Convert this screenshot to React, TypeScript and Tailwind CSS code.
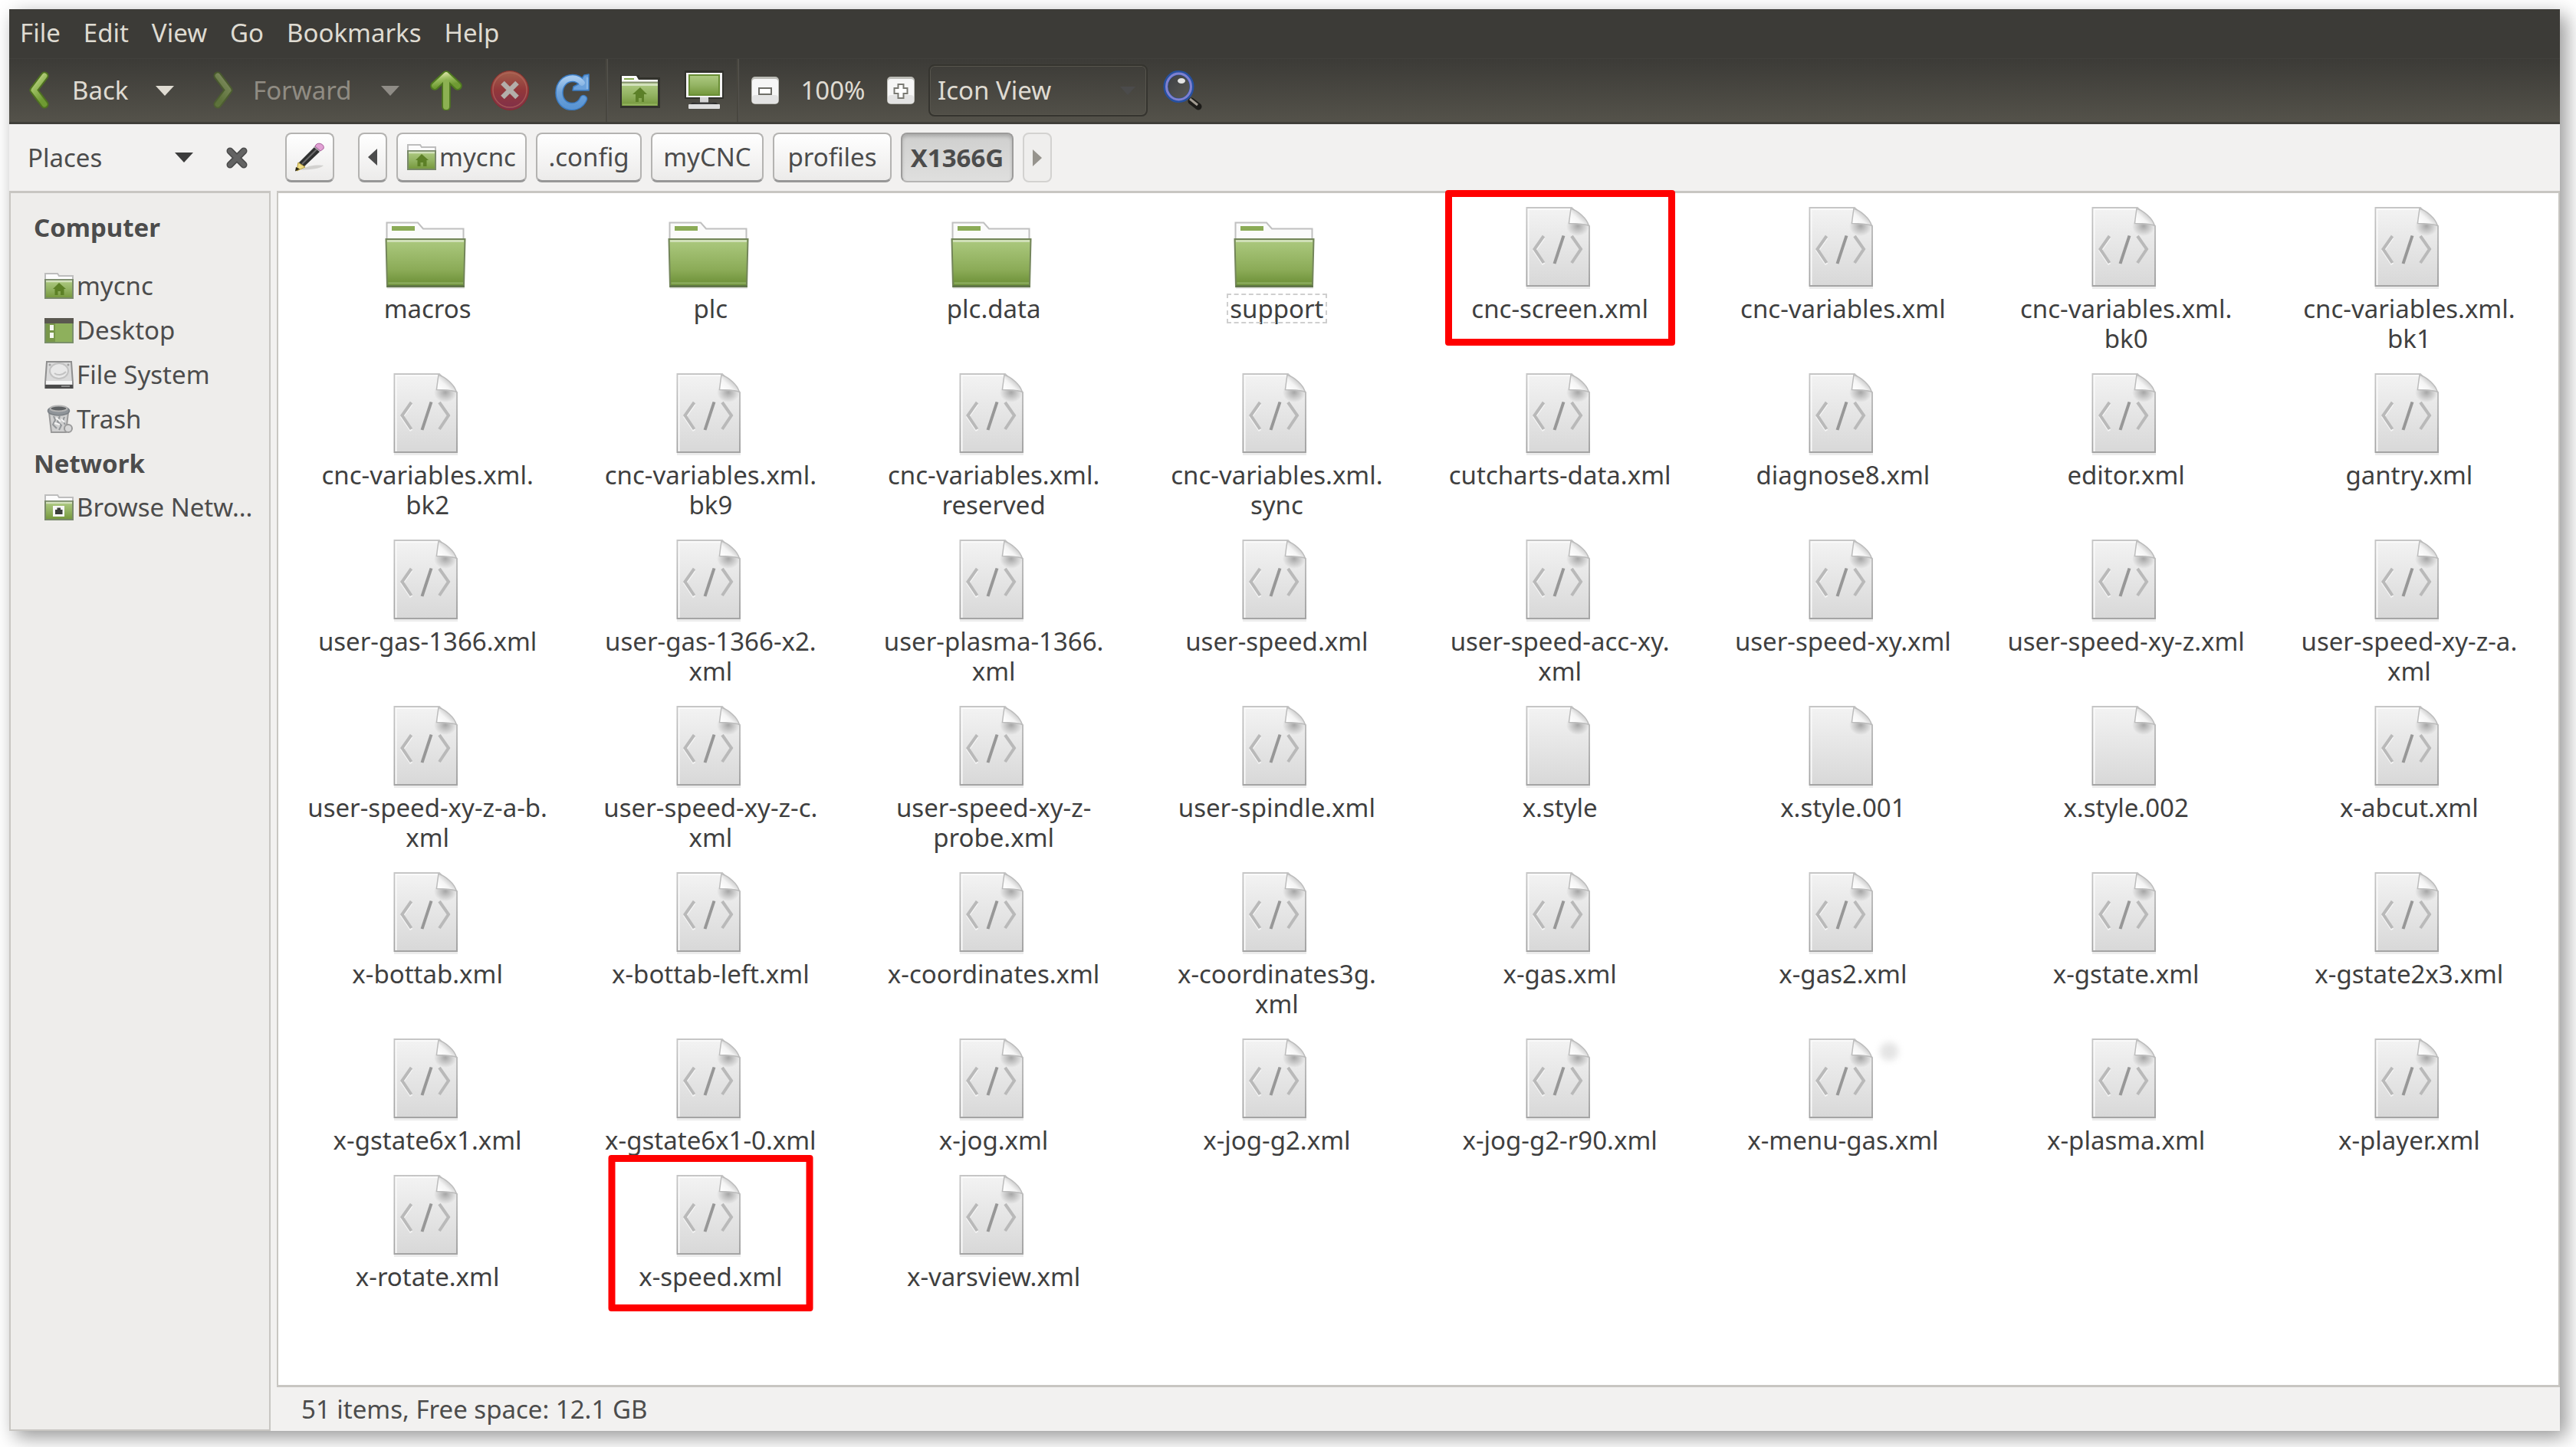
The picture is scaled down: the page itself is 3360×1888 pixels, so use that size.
import React from "react";

type Kind = "folder" | "xml" | "blank";
type Entry = { name: string; kind: Kind; mark?: "wide" | "narrow"; focused?: boolean; dot?: boolean };

const xml = (name: string, extra: Partial<Entry> = {}): Entry => ({ name, kind: "xml", ...extra });
const folder = (name: string, focused = false): Entry => ({ name, kind: "folder", focused });
const blank = (name: string): Entry => ({ name, kind: "blank" });

const entries: Entry[] = [
  folder("macros"),
  folder("plc"),
  folder("plc.data"),
  folder("support", true),
  xml("cnc-screen.xml", { mark: "wide" }),
  xml("cnc-variables.xml"),
  xml("cnc-variables.xml.\nbk0"),
  xml("cnc-variables.xml.\nbk1"),
  xml("cnc-variables.xml.\nbk2"),
  xml("cnc-variables.xml.\nbk9"),
  xml("cnc-variables.xml.\nreserved"),
  xml("cnc-variables.xml.\nsync"),
  xml("cutcharts-data.xml"),
  xml("diagnose8.xml"),
  xml("editor.xml"),
  xml("gantry.xml"),
  xml("user-gas-1366.xml"),
  xml("user-gas-1366-x2.\nxml"),
  xml("user-plasma-1366.\nxml"),
  xml("user-speed.xml"),
  xml("user-speed-acc-xy.\nxml"),
  xml("user-speed-xy.xml"),
  xml("user-speed-xy-z.xml"),
  xml("user-speed-xy-z-a.\nxml"),
  xml("user-speed-xy-z-a-b.\nxml"),
  xml("user-speed-xy-z-c.\nxml"),
  xml("user-speed-xy-z-\nprobe.xml"),
  xml("user-spindle.xml"),
  blank("x.style"),
  blank("x.style.001"),
  blank("x.style.002"),
  xml("x-abcut.xml"),
  xml("x-bottab.xml"),
  xml("x-bottab-left.xml"),
  xml("x-coordinates.xml"),
  xml("x-coordinates3g.\nxml"),
  xml("x-gas.xml"),
  xml("x-gas2.xml"),
  xml("x-gstate.xml"),
  xml("x-gstate2x3.xml"),
  xml("x-gstate6x1.xml"),
  xml("x-gstate6x1-0.xml"),
  xml("x-jog.xml"),
  xml("x-jog-g2.xml"),
  xml("x-jog-g2-r90.xml"),
  xml("x-menu-gas.xml", { dot: true }),
  xml("x-plasma.xml"),
  xml("x-player.xml"),
  xml("x-rotate.xml"),
  xml("x-speed.xml", { mark: "narrow" }),
  xml("x-varsview.xml"),
];

function Gradients() {
  return (
    <svg className="absolute size-0" aria-hidden="true">
      <defs>
        <linearGradient id="leaf" x1="0" y1="0" x2="0" y2="1">
          <stop offset="0" stopColor="#afcb83" />
          <stop offset="0.5" stopColor="#94b464" />
          <stop offset="1" stopColor="#74973b" />
        </linearGradient>
        <linearGradient id="leafDeep" x1="0" y1="0" x2="0" y2="1">
          <stop offset="0" stopColor="#adca80" />
          <stop offset="0.65" stopColor="#8bab57" />
          <stop offset="1" stopColor="#688c33" />
        </linearGradient>
        <linearGradient id="arrow" x1="0" y1="0" x2="0.4" y2="1">
          <stop offset="0" stopColor="#d3dd9d" />
          <stop offset="0.4" stopColor="#9dbf62" />
          <stop offset="1" stopColor="#6f9a33" />
        </linearGradient>
        <linearGradient id="paper" x1="0" y1="0" x2="0" y2="1">
          <stop offset="0" stopColor="#f3f3f3" />
          <stop offset="1" stopColor="#d8d8d8" />
        </linearGradient>
        <linearGradient id="paperEdge" x1="0" y1="0" x2="0" y2="1">
          <stop offset="0" stopColor="#c6c6c6" />
          <stop offset="1" stopColor="#a4a4a4" />
        </linearGradient>
        <linearGradient id="curl" x1="0.1" y1="0.9" x2="0.75" y2="0.3">
          <stop offset="0" stopColor="#ffffff" />
          <stop offset="0.5" stopColor="#f4f4f4" />
          <stop offset="1" stopColor="#bdbdbd" />
        </linearGradient>
        <linearGradient id="stop" x1="0" y1="0" x2="0" y2="1">
          <stop offset="0" stopColor="#a2604c" />
          <stop offset="0.5" stopColor="#92373a" />
          <stop offset="1" stopColor="#7f2f4a" />
        </linearGradient>
        <linearGradient id="blue" x1="0" y1="0" x2="0" y2="1">
          <stop offset="0" stopColor="#a5c9ee" />
          <stop offset="0.5" stopColor="#6fa3da" />
          <stop offset="1" stopColor="#5a95d4" />
        </linearGradient>
        <linearGradient id="lens" x1="0" y1="0" x2="1" y2="1">
          <stop offset="0" stopColor="#3b3d43" />
          <stop offset="1" stopColor="#5b5b54" />
        </linearGradient>
        <radialGradient id="foldShade">
          <stop offset="0" stopColor="#000000" stopOpacity="0.3" />
          <stop offset="1" stopColor="#000000" stopOpacity="0" />
        </radialGradient>
      </defs>
    </svg>
  );
}

function FolderArt() {
  return (
    <svg className="block h-[110px] w-[114px]" viewBox="0 0 114 110" aria-hidden="true">
      <rect x="4" y="108" width="101" height="2" fill="#e9e9e9" />
      <path d="M3.500 46V23.500H44L51 31.500H103.500V46Z" fill="#fbfbfb" stroke="#c0c0c0" strokeWidth="2" />
      <rect x="10" y="28" width="30" height="6" fill="#8bab57" />
      <path d="M2.500 45H105.500L104 107H4Z" fill="url(#leafDeep)" stroke="#73855a" strokeWidth="2" />
      <path d="M4 47.500H104" stroke="#d6e3c1" strokeWidth="2.500" />
      <path d="M5.500 102.500H103" stroke="#86a758" strokeWidth="3" />
      <path d="M4 106.500H104.500" stroke="#5f734a" strokeWidth="2.500" />
    </svg>
  );
}

function PageArt({ code }: { code: boolean }) {
  return (
    <svg className="block h-[110px] w-[114px]" viewBox="0 0 114 110" aria-hidden="true">
      <rect x="13" y="107" width="83" height="3" fill="#ececec" />
      <path d="M13.500 4H72L95 28V106H13.500Z" fill="url(#paper)" stroke="url(#paperEdge)" strokeWidth="2" />
      <path d="M15.500 105V6H70" fill="none" stroke="#fafafa" strokeWidth="2" />
      <ellipse cx="80" cy="28" rx="15" ry="13" fill="url(#foldShade)" />
      <path d="M71 5C70 12 69 19 68.500 24.500C77 24.500 87 25 94 27C92 18 80 8 71 5Z" fill="url(#curl)" stroke="#bcbcbc" strokeWidth="1.500" />
      {code && (
        <g fill="none" strokeWidth="4">
          <path d="M35.500 43L23.500 60L35.500 78" stroke="#ffffff" strokeOpacity="0.7" />
          <path d="M35.500 41L23.500 58L35.500 76" stroke="#b9b9b9" />
          <path d="M72 41L84 58L72 76" stroke="#b9b9b9" />
          <path d="M61.500 40.500L49.500 77" stroke="#979797" />
        </g>
      )}
    </svg>
  );
}

function Tile({ entry }: { entry: Entry }) {
  return (
    <li className="relative flex flex-col items-center pb-[23px]">
      {entry.mark === "wide" && (
        <span className="pointer-events-none absolute -top-[19px] left-1/2 h-[203px] w-[300px] -translate-x-1/2 rounded border-9 border-[#ff0000]" />
      )}
      {entry.mark === "narrow" && (
        <span className="pointer-events-none absolute -top-[23px] left-1/2 h-[204px] w-[267px] -translate-x-1/2 rounded border-9 border-[#ff0000]" />
      )}
      <button type="button" className="relative flex flex-col items-center">
        {entry.kind === "folder" ? <FolderArt /> : <PageArt code={entry.kind === "xml"} />}
        {entry.dot && <span className="absolute top-2 left-1/2 ml-12 size-6 rounded-full bg-[#e4e4e4] blur-[4px]" />}
        <span
          className={
            entry.focused
              ? "mt-[6px] -mx-1 px-1 text-center leading-[39px] whitespace-pre outline-2 -outline-offset-2 outline-dashed outline-[#cfcfcf]"
              : "mt-[6px] text-center leading-[39px] whitespace-pre"
          }
        >
          {entry.name}
        </span>
      </button>
    </li>
  );
}

function HomeFolder({ className }: { className: string }) {
  return (
    <svg className={className} viewBox="0 0 38 34" aria-hidden="true">
      <path d="M1 9V1H17L19 4H37V9Z" fill="#fcfcfc" stroke="#bdbdbd" strokeWidth="2" />
      <rect x="1" y="9" width="36" height="24" fill="url(#leaf)" stroke="#79896a" strokeWidth="2" />
      <path d="M2 11H36" stroke="#d3e1bd" strokeWidth="2.500" />
      <path d="M19 13L28 21H25.500V29H21V24H17.500V29H13.500V21H11Z" fill="#5c8026" />
    </svg>
  );
}

function NetworkFolder() {
  return (
    <svg className="h-[34px] w-[38px]" viewBox="0 0 38 34" aria-hidden="true">
      <path d="M1 9V1H17L19 4H37V9Z" fill="#fcfcfc" stroke="#bdbdbd" strokeWidth="2" />
      <rect x="1" y="9" width="36" height="24" fill="url(#leaf)" stroke="#79896a" strokeWidth="2" />
      <path d="M2 11H36" stroke="#d3e1bd" strokeWidth="2.500" />
      <rect x="11" y="15" width="15" height="14" fill="#f7f7f7" />
      <path d="M14 26V20H16.500V17.500H21V20H23.500V26Z" fill="#3b3f3b" />
    </svg>
  );
}

function DesktopIcon() {
  return (
    <svg className="h-[34px] w-[38px]" viewBox="0 0 38 34" aria-hidden="true">
      <rect x="1" y="2" width="36" height="31" fill="#8eb05c" stroke="#7a906a" strokeWidth="2" />
      <rect x="2" y="8" width="12" height="24" fill="#78974a" />
      <rect x="0" y="1" width="38" height="7" fill="#5a5850" />
      <rect x="7" y="10" width="5" height="7" fill="#f6f8f2" />
      <rect x="7" y="20" width="5" height="7" fill="#f6f8f2" />
    </svg>
  );
}

function DriveIcon() {
  return (
    <svg className="h-[38px] w-[38px]" viewBox="0 0 38 38" aria-hidden="true">
      <path d="M3 2H35L37 30V36H1V30Z" fill="#dadada" stroke="#8e8e8e" strokeWidth="2" />
      <ellipse cx="19" cy="14" rx="12" ry="10" fill="#e8e8e8" stroke="#c2c2c2" strokeWidth="2" />
      <path d="M13 17C17 20 23 20 28 15" fill="none" stroke="#c2c2c2" strokeWidth="2" />
      <circle cx="7" cy="6" r="1.500" fill="#a0a0a0" />
      <circle cx="31" cy="6" r="1.500" fill="#a0a0a0" />
      <rect x="2" y="27" width="34" height="4" fill="#f6f6f6" />
      <rect x="1" y="32" width="36" height="5" fill="#4b4b4b" />
      <rect x="22" y="33" width="11" height="2" fill="#8b8b8b" />
    </svg>
  );
}

function TrashIcon() {
  return (
    <svg className="h-[38px] w-[38px]" viewBox="0 0 38 38" aria-hidden="true">
      <path d="M6 10L9 36H28L31 10Z" fill="#cfcfcf" stroke="#9a9a9a" strokeWidth="2" />
      <path d="M12 15L14 20L11 26L16 31M20 15L17 22L22 27L19 33M26 16L24 21L27 26" fill="none" stroke="#94979a" strokeWidth="2" />
      <path d="M15 17L21 22M13 24L20 26M22 19L26 23" stroke="#f4f4f4" strokeWidth="2" />
      <ellipse cx="18.500" cy="8" rx="14" ry="6" fill="#8f9499" stroke="#7b8085" strokeWidth="1.500" />
      <ellipse cx="18.500" cy="5" rx="11" ry="3.500" fill="#5e6163" stroke="#b4b4b4" strokeWidth="2" />
      <circle cx="31" cy="31" r="5" fill="#d8d8d8" stroke="#9a9a9a" strokeWidth="2" />
    </svg>
  );
}

function Caret({ className }: { className: string }) {
  return (
    <svg className={className} viewBox="0 0 24 13" aria-hidden="true">
      <path d="M0 0H24L12 13Z" fill="currentColor" />
    </svg>
  );
}

function Chevron({ flip }: { flip?: boolean }) {
  return (
    <svg className={flip ? "h-[50px] w-7 -scale-x-100 opacity-50" : "h-[50px] w-7"} viewBox="0 0 28 50" aria-hidden="true">
      <path d="M22 6L8 24.500L22 43" fill="none" stroke="#4f7220" strokeWidth="11" strokeLinecap="round" strokeLinejoin="round" />
      <path d="M22 6L8 24.500L22 43" fill="none" stroke="url(#arrow)" strokeWidth="7" strokeLinecap="round" strokeLinejoin="round" />
    </svg>
  );
}

function UpIcon() {
  return (
    <svg className="h-[52px] w-[42px]" viewBox="0 0 42 52" aria-hidden="true">
      <path d="M21 47V9M6 20L21 6L36 20" fill="none" stroke="#4f7a1f" strokeWidth="11.500" strokeLinecap="round" strokeLinejoin="round" />
      <path d="M21 47V9" fill="none" stroke="#8cb152" strokeWidth="8" strokeLinecap="round" />
      <path d="M6 20L21 6L36 20" fill="none" stroke="url(#arrow)" strokeWidth="7.500" strokeLinecap="round" strokeLinejoin="round" />
    </svg>
  );
}

function StopIcon() {
  return (
    <svg className="h-[52px] w-[50px]" viewBox="0 0 50 52" aria-hidden="true">
      <ellipse cx="25" cy="26" rx="24.500" ry="25.500" fill="url(#stop)" stroke="#8b2c2c" strokeWidth="1" />
      <ellipse cx="25" cy="25.500" rx="22" ry="22.500" fill="none" stroke="#b4675d" strokeOpacity="0.7" strokeWidth="1.500" />
      <path d="M15.500 16L34.500 35M34.500 16L15.500 35" stroke="#b3aeaa" strokeWidth="6.500" />
    </svg>
  );
}

function ReloadIcon() {
  return (
    <svg className="h-[52px] w-[46px]" viewBox="0 0 46 52" aria-hidden="true">
      <path d="M37 37C34 44 28 47 22 47C12 47 5.500 39 5.500 29C5.500 18 13 10 23 10C28 10 32 12 35 16" fill="none" stroke="#3b7cc4" strokeWidth="10.500" strokeLinecap="round" />
      <path d="M44 5V26H23L24 21L30 18L38 6Z" fill="#6ba1db" stroke="#3b7cc4" strokeWidth="1.500" strokeLinejoin="round" />
      <path d="M37 37C34 44 28 47 22 47C12 47 5.500 39 5.500 29C5.500 18 13 10 23 10C28 10 32 12 35 16" fill="none" stroke="url(#blue)" strokeWidth="7.500" strokeLinecap="round" />
      <path d="M42 9V24" stroke="#8ab7e6" strokeWidth="2.500" />
    </svg>
  );
}

function BigHomeIcon() {
  return (
    <svg className="h-[52px] w-[52px]" viewBox="0 0 52 52" aria-hidden="true">
      <path d="M0 6H25V9H52V49H0Z" fill="#32322c" />
      <path d="M2 7H21L24 12H49V18H2Z" fill="#fafafa" />
      <rect x="5" y="10" width="13" height="2" fill="#86a951" />
      <rect x="2" y="16" width="47" height="30" fill="url(#leaf)" />
      <path d="M2 15.500H49" stroke="#84906f" strokeWidth="2" />
      <path d="M2 18.500H49" stroke="#d3e1bd" strokeWidth="3" />
      <path d="M26 22L35 31H31V41H28V36H24V41H20V31H16Z" fill="#5c8028" />
      <path d="M3 44.500H48" stroke="#93b45f" strokeWidth="2" />
    </svg>
  );
}

function ComputerIcon() {
  return (
    <svg className="h-[52px] w-[52px]" viewBox="0 0 52 52" aria-hidden="true">
      <rect x="0" y="0" width="51" height="37" rx="1" fill="#31312c" />
      <rect x="2" y="3" width="47" height="32" fill="#f3f3f3" />
      <rect x="6" y="6" width="39" height="26" fill="url(#leaf)" stroke="#6a8f35" strokeWidth="2" />
      <path d="M20 35H31V42H20Z" fill="#d4d4d4" />
      <path d="M10 42H41L46 46H5Z" fill="#2b2b2b" />
      <path d="M16 42L36 44H26Z" fill="#b9b9b9" />
      <rect x="5" y="44" width="41" height="6" rx="1" fill="#dedede" />
      <path d="M8 44L20 41.500H33L40 44Z" fill="#3a3a3a" />
    </svg>
  );
}

function ZoomIcon({ plus }: { plus?: boolean }) {
  return (
    <svg className="h-9 w-9" viewBox="0 0 36 36" aria-hidden="true">
      <rect x="0" y="0" width="36" height="36" rx="5" fill="#bcbcb6" />
      <rect x="1" y="3" width="34" height="32" rx="4" fill="#f6f6f6" />
      <rect x="1" y="24" width="34" height="11" rx="4" fill="#e3e3e3" />
      {plus ? (
        <path d="M14.500 10H21.500V15H26.500V22H21.500V28H14.500V22H9.500V15H14.500Z" fill="#ffffff" stroke="#7a7a74" strokeWidth="2" />
      ) : (
        <rect x="10" y="15" width="16" height="8" fill="#ffffff" stroke="#6e6e68" strokeWidth="2" />
      )}
    </svg>
  );
}

function SearchIcon() {
  return (
    <svg className="h-[52px] w-[52px]" viewBox="0 0 52 52" aria-hidden="true">
      <path d="M37 40L46 47" stroke="#1d1c19" strokeWidth="9" strokeLinecap="round" />
      <path d="M35 37L45 45" stroke="#a19a90" strokeWidth="3" />
      <ellipse cx="20.500" cy="21" rx="17" ry="18" fill="url(#lens)" stroke="#2650a0" strokeWidth="6" />
      <ellipse cx="20.500" cy="21" rx="16" ry="17" fill="none" stroke="#7f80cf" strokeWidth="3" />
      <ellipse cx="24" cy="13.500" rx="5" ry="3.500" fill="#ffffff" fillOpacity="0.85" />
    </svg>
  );
}

function PencilIcon() {
  return (
    <svg className="h-10 w-10" viewBox="0 0 40 40" aria-hidden="true">
      <path d="M8 37C18 30 32 30 38 31C34 35 22 36 8 37Z" fill="#d2d1cf" />
      <path d="M5 28L26 7L33 13L12 33Z" fill="#2f3030" />
      <path d="M10 29L29 10" stroke="#6a6a6a" strokeWidth="2" />
      <path d="M25 7L29 4L36 10L33 13Z" fill="#a9a9a9" />
      <path d="M28 4C31 0 40 3 38 9L34 12L27 6Z" fill="#e1a0d4" stroke="#a8639c" strokeWidth="1" />
      <path d="M5 27L14 33L3 38Z" fill="#efdc84" stroke="#b39b3a" strokeWidth="1" />
      <path d="M2 33L7 35.500L1 38.500Z" fill="#2a2512" />
    </svg>
  );
}

function CloseIcon() {
  return (
    <svg className="h-7 w-7" viewBox="0 0 28 28" aria-hidden="true">
      <path d="M5 5L23 23M23 5L5 23" stroke="#4a4a4a" strokeWidth="9" strokeLinecap="round" />
      <path d="M5 5L23 23M23 5L5 23" stroke="#636363" strokeWidth="6" strokeLinecap="round" />
    </svg>
  );
}

const crumb =
  "flex h-[65px] items-center justify-center rounded-lg border-2 border-b-3 border-[#b4b3b1] border-b-[#979797] bg-linear-to-b from-white to-[#ecebea]";

const places = [
  { label: "mycnc", icon: <HomeFolder className="h-[34px] w-[38px]" /> },
  { label: "Desktop", icon: <DesktopIcon /> },
  { label: "File System", icon: <DriveIcon /> },
  { label: "Trash", icon: <TrashIcon /> },
];

function PlaceLink({ label, icon }: { label: string; icon: React.ReactNode }) {
  return (
    <li>
      <a href="#" className="flex h-[58px] items-center gap-1 pl-11">
        <span className="flex w-[38px] shrink-0 justify-center">{icon}</span>
        <span className="whitespace-nowrap">{label}</span>
      </a>
    </li>
  );
}

export default function App() {
  return (
    <div className="flex min-h-screen flex-col bg-white pt-3 pr-[21px] pb-[21px] pl-3 font-['Noto_Sans',sans-serif] text-[33px] leading-[40px] text-[#3f3f3f]">
      <Gradients />
      <div className="flex grow flex-col bg-[#f2f1f0] shadow-[8px_8px_24px_rgba(0,0,0,0.42)]">
        <header className="bg-[#3c3b37] text-[#dfdbd2]">
          <nav className="flex h-16 items-center gap-[30px] pb-[2px] pl-[14px]">
            {["File", "Edit", "View", "Go", "Bookmarks", "Help"].map((m) => (
              <button type="button" key={m}>
                {m}
              </button>
            ))}
          </nav>
          <div className="flex h-[86px] items-center border-t border-b-3 border-t-[#42413d] border-b-[#403f3a] bg-linear-to-b from-[#3c3b37] to-[#54524a] pl-6">
            <button type="button" className="flex w-[158px] items-center gap-[30px]">
              <Chevron />
              Back
            </button>
            <button type="button" aria-label="Back history" className="flex w-[84px] pl-[9px]">
              <Caret className="h-[13px] w-6" />
            </button>
            <button type="button" className="flex w-[210px] items-center gap-6 text-[#908c83]">
              <Chevron flip />
              Forward
            </button>
            <button type="button" aria-label="Forward history" className="flex w-[73px] pl-[9px] text-[#8f8c86]">
              <Caret className="h-[13px] w-6" />
            </button>
            <button type="button" aria-label="Up" className="w-[79px]">
              <UpIcon />
            </button>
            <button type="button" aria-label="Stop" className="w-[84px]">
              <StopIcon />
            </button>
            <button type="button" aria-label="Reload" className="w-[66px]">
              <ReloadIcon />
            </button>
            <span className="mr-4 h-full w-[3px] border-l-2 border-[#48463f] bg-[#54534e]" />
            <button type="button" aria-label="Home" className="w-[84px]">
              <BigHomeIcon />
            </button>
            <button type="button" aria-label="Computer" className="w-[68px]">
              <ComputerIcon />
            </button>
            <span className="mr-4 h-full w-[3px] border-l-2 border-[#48463f] bg-[#54534e]" />
            <button type="button" aria-label="Zoom out">
              <ZoomIcon />
            </button>
            <button type="button" className="w-[141px] text-center">
              100%
            </button>
            <button type="button" aria-label="Zoom in">
              <ZoomIcon plus />
            </button>
            <div className="relative ml-[18px]">
              <select
                aria-label="View mode"
                className="block h-[68px] w-[286px] appearance-none rounded-lg border-2 border-[#35342f] bg-transparent pl-[10px] text-[#dfdbd2] inset-ring-1 inset-ring-[#57554d]"
              >
                <option>Icon View</option>
              </select>
              <Caret className="pointer-events-none absolute top-7 right-4 h-[13px] w-5 text-[#4b4b4b]" />
            </div>
            <button type="button" aria-label="Search" className="ml-5">
              <SearchIcon />
            </button>
          </div>
        </header>

        <div className="flex h-[87px] items-center text-[#4c4c4c]">
          <div className="flex w-[360px] items-center">
            <button type="button" className="flex w-[283px] items-center justify-between pr-[43px] pl-6">
              Places
              <Caret className="h-[13px] w-6 text-[#3c3c3c]" />
            </button>
            <button type="button" aria-label="Close side pane">
              <CloseIcon />
            </button>
          </div>
          <button type="button" aria-label="Edit location" className={`${crumb} w-16`}>
            <PencilIcon />
          </button>
          <nav className="ml-[31px] flex gap-3">
            <button type="button" aria-label="Previous" className={`${crumb} w-[38px]`}>
              <svg className="h-[22px] w-3" viewBox="0 0 12 22" aria-hidden="true">
                <path d="M12 0V22L0 11Z" fill="#4c4c4c" />
              </svg>
            </button>
            <button type="button" className={`${crumb} w-[170px] gap-1`}>
              <HomeFolder className="h-[34px] w-[38px]" />
              mycnc
            </button>
            <button type="button" className={`${crumb} w-[138px]`}>
              .config
            </button>
            <button type="button" className={`${crumb} w-[147px]`}>
              myCNC
            </button>
            <button type="button" className={`${crumb} w-[155px]`}>
              profiles
            </button>
            <button
              type="button"
              className="flex h-[65px] w-[147px] items-center justify-center rounded-lg border-2 border-[#9c9b9a] border-b-[#b5b4b3] bg-linear-to-b from-[#cfcfce] to-[#dfdfde] font-bold inset-shadow-[0_3px_4px_rgba(0,0,0,0.18)]"
            >
              X1366G
            </button>
            <button
              type="button"
              aria-label="Next"
              className="flex h-[65px] w-[38px] items-center justify-center rounded-lg border-2 border-[#d3d2d0] bg-[#efeeed]"
            >
              <svg className="h-[22px] w-3" viewBox="0 0 12 22" aria-hidden="true">
                <path d="M0 0V22L12 11Z" fill="#96938d" />
              </svg>
            </button>
          </nav>
        </div>

        <div className="flex grow gap-2">
          <aside className="w-[341px] shrink-0 border-2 border-t-3 border-[#c8c6c2] bg-[#eeedeb] pt-[21px] text-[#4c4c4c]">
            <h2 className="flex h-[48px] items-center pl-[30px] font-bold">Computer</h2>
            <ul className="pt-[23px]">
              {places.map((p) => (
                <PlaceLink key={p.label} label={p.label} icon={p.icon} />
              ))}
            </ul>
            <h2 className="flex h-[57px] items-center pl-[30px] font-bold">Network</h2>
            <ul>
              <PlaceLink label="Browse Netw..." icon={<NetworkFolder />} />
            </ul>
          </aside>

          <div className="flex grow flex-col">
            <main className="grow border-2 border-t-3 border-b-3 border-[#c8c6c2] bg-white">
              <ul className="grid grid-cols-8 pt-[15px] pr-[10px] pl-[10px]">
                {entries.map((e) => (
                  <Tile key={e.name} entry={e} />
                ))}
              </ul>
            </main>
            <footer className="flex h-[57px] items-center pl-8 text-[#4c4c4c]">51 items, Free space: 12.1 GB</footer>
          </div>
        </div>
      </div>
    </div>
  );
}
